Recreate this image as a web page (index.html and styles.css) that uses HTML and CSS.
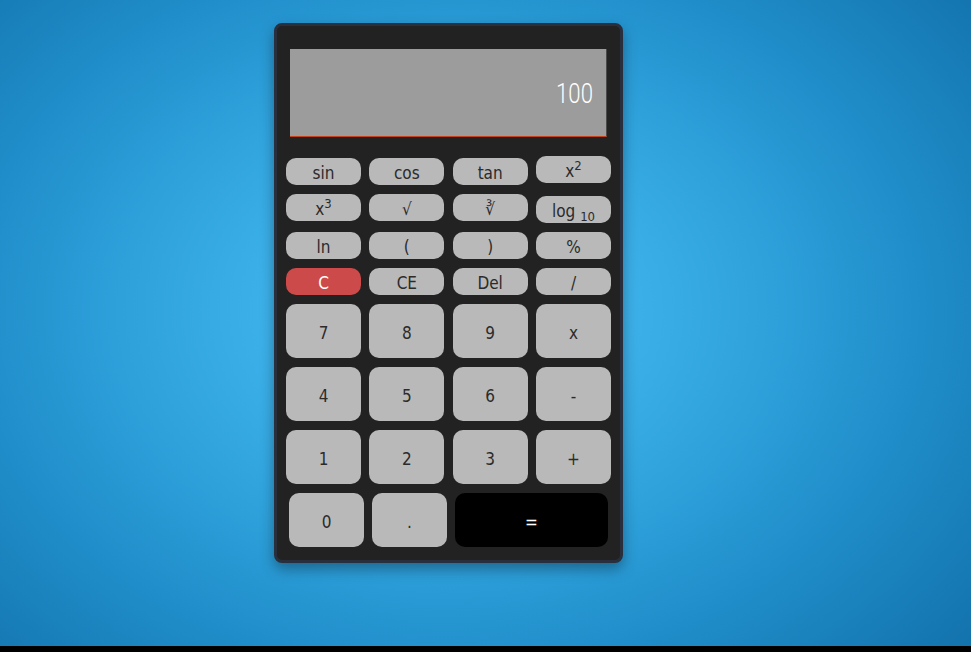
FILE: index.html
```html
<!DOCTYPE html>
<html lang="en">
<head>
<meta charset="utf-8">
<title>Calculator</title>
<link rel="stylesheet" href="styles.css">
</head>
<body>
<div class="page">
  <div class="calc">
    <div class="display"><span class="readout">100</span></div>
    <div class="keys">
      <div class="row small">
        <button class="key">sin</button>
        <button class="key">cos</button>
        <button class="key">tan</button>
        <button class="key raise">x<sup>2</sup></button>
      </div>
      <div class="row small">
        <button class="key">x<sup>3</sup></button>
        <button class="key">&#8730;</button>
        <button class="key">&#8731;</button>
        <button class="key lower">log <sub>10</sub></button>
      </div>
      <div class="row small">
        <button class="key">ln</button>
        <button class="key">(</button>
        <button class="key">)</button>
        <button class="key">%</button>
      </div>
      <div class="row small">
        <button class="key clear">C</button>
        <button class="key">CE</button>
        <button class="key">Del</button>
        <button class="key">/</button>
      </div>
      <div class="row big">
        <button class="key">7</button>
        <button class="key">8</button>
        <button class="key">9</button>
        <button class="key">x</button>
      </div>
      <div class="row big">
        <button class="key">4</button>
        <button class="key">5</button>
        <button class="key">6</button>
        <button class="key">-</button>
      </div>
      <div class="row big">
        <button class="key">1</button>
        <button class="key">2</button>
        <button class="key">3</button>
        <button class="key">+</button>
      </div>
      <div class="row big last">
        <button class="key">0</button>
        <button class="key">.</button>
        <button class="key equals">=</button>
      </div>
    </div>
  </div>
</div>
</body>
</html>
```

FILE: styles.css
```css
html {
  background: #000;
}
body {
  margin: 0;
}
.page {
  height: 646px;
  box-sizing: border-box;
  padding-top: 23px;
  padding-left: 274px;
  background: radial-gradient(ellipse 70% 80% at 46% 48%, #43b8f0 0%, #3fb4ec 22%, #30a3dd 45%, #1f8dc9 70%, #1373ad 100%);
  overflow: hidden;
}
.calc {
  width: 343px;
  border: 3px solid #2a2f3e;
  border-radius: 8px;
  background: #222222;
  box-shadow: 0 6px 14px rgba(0, 0, 0, 0.35);
  padding: 23px 0 13px;
}
.display {
  margin: 0 13px;
  height: 87px;
  background: #9c9c9c;
  border-bottom: 1px solid #c4441a;
  border-right: 1px solid #4a4a4a;
  display: flex;
  align-items: center;
  justify-content: flex-end;
  padding-right: 13px;
}
.readout {
  display: inline-block;
  font-family: Roboto, "DejaVu Sans Condensed", sans-serif;
  font-weight: 300;
  font-size: 27px;
  line-height: 30px;
  color: #ffffff;
  transform: scaleX(0.82);
  transform-origin: right center;
  padding-top: 2px;
}
.keys {
  margin-top: 21px;
  padding-left: 9px;
  display: flex;
  flex-direction: column;
  gap: 9px;
}
.row {
  display: flex;
  align-items: flex-start;
  width: 325px;
  justify-content: space-between;
}
.key {
  width: 75px;
  border: none;
  margin: 0;
  padding: 0;
  background: #b9b9b9;
  color: #2b2b2b;
  font-family: "DejaVu Sans Condensed", "DejaVu Sans", sans-serif;
  font-size: 17px;
  line-height: 20px;
  cursor: pointer;
}
.small .key {
  height: 27px;
  border-radius: 10px;
  padding-top: 2px;
}
.big .key {
  height: 54px;
  border-radius: 10px;
  padding-top: 3px;
}
.key sup {
  font-size: 13px;
  line-height: 0;
  vertical-align: 7px;
}
.key sub {
  font-size: 13px;
  line-height: 0;
  vertical-align: -4px;
}
.raise {
  margin-top: -2px;
}
.lower {
  margin-top: 2px;
}
.clear {
  background: #cc4a4a;
  color: #ffffff;
}
.last {
  justify-content: flex-start;
  gap: 8px;
  padding-left: 3px;
}
.big .equals {
  width: 153px;
  background: #000000;
  color: #ffffff;
}
```
